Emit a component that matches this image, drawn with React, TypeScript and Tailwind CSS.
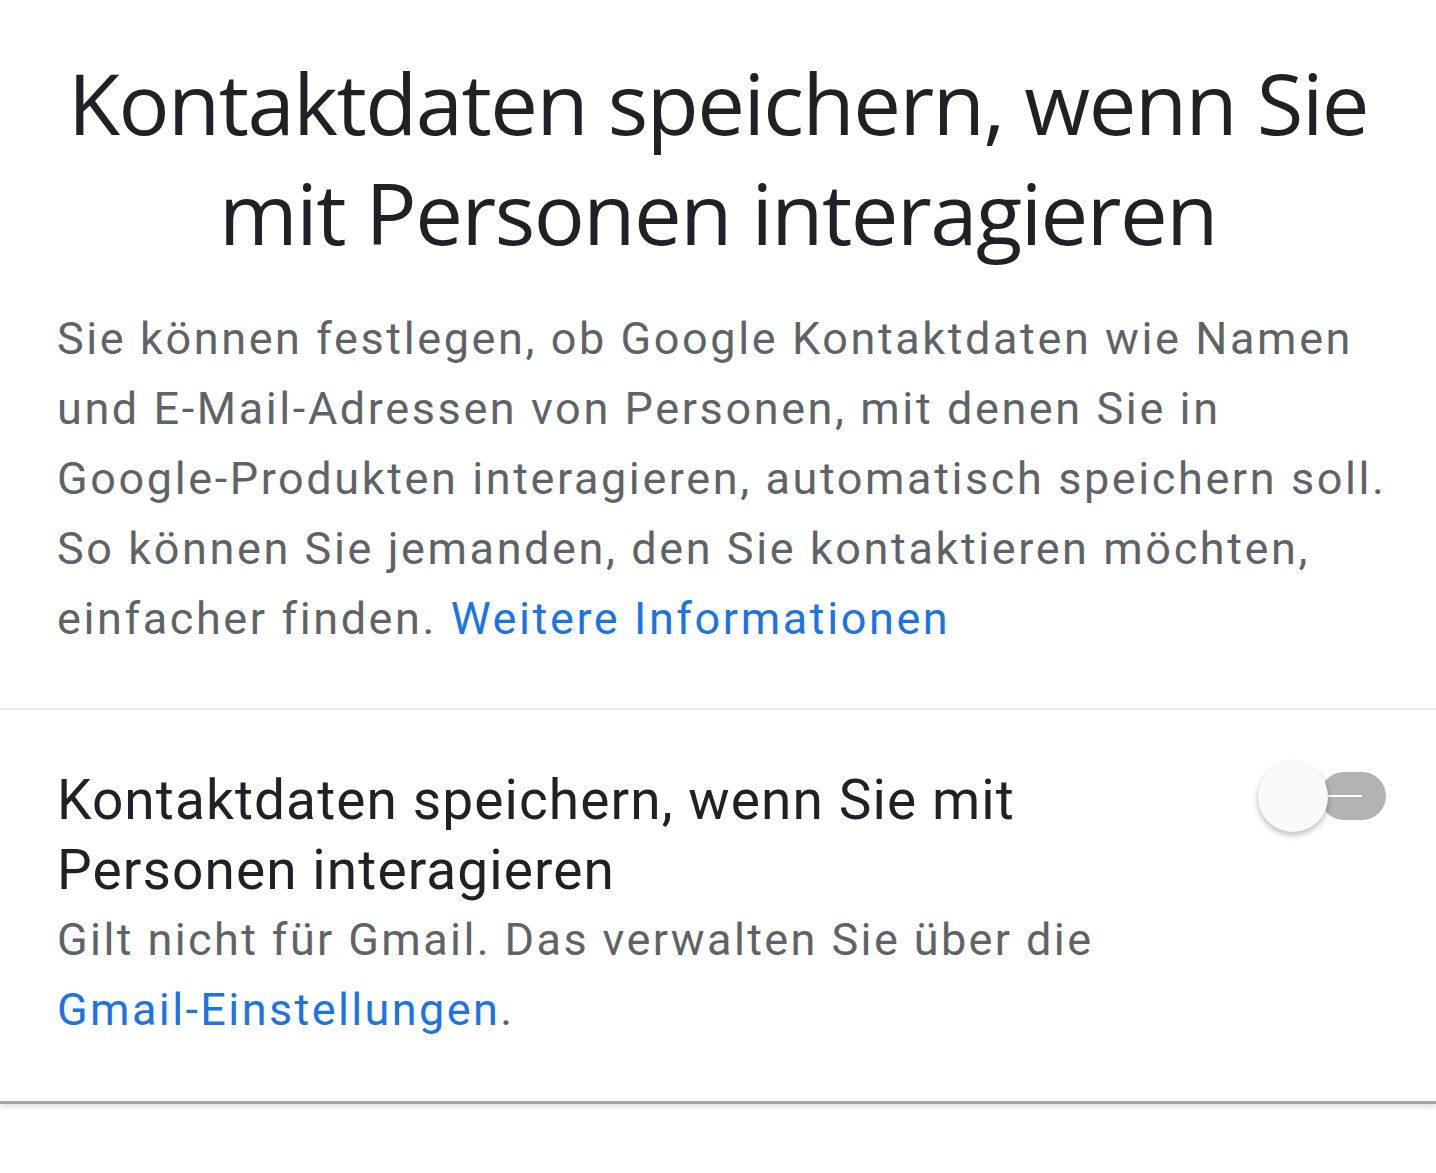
import React from "react";

function Toggle() {
  return (
    <div className="relative w-[128px] h-[70px] shrink-0 mt-[-3px]">
      <div className="absolute right-0 top-[10px] w-[66px] h-[48px] rounded-full bg-[#b3b3b3]">
        <div className="absolute left-[8px] top-[23px] w-[34px] h-[2px] bg-white" />
      </div>
      <div className="absolute left-0 top-0 w-[70px] h-[70px] rounded-full bg-[#fafafa] shadow-[0_3px_6px_rgba(0,0,0,0.28)]" />
    </div>
  );
}

function App() {
  return (
    <div className="w-[1436px] h-[1173px] bg-white overflow-hidden font-['Roboto',sans-serif]">
      <h1 className="pt-[47px] text-center text-[85px] leading-[110px] text-[#202124] font-['Open_Sans',sans-serif] font-normal tracking-[-1.5px]">
        Kontaktdaten speichern, wenn Sie
        <br />
        mit Personen interagieren
      </h1>

      <p className="mt-[37px] pl-[57px] text-[45px] leading-[70px] tracking-[2.6px] text-[#5f6368] whitespace-nowrap">
        Sie können festlegen, ob Google Kontaktdaten wie Namen
        <br />
        und E-Mail-Adressen von Personen, mit denen Sie in
        <br />
        Google-Produkten interagieren, automatisch speichern soll.
        <br />
        So können Sie jemanden, den Sie kontaktieren möchten,
        <br />
        einfacher finden. <span className="text-[#1a73e8]">Weitere Informationen</span>
      </p>

      <div className="mt-[54px] h-[2px] bg-[#ececec]" />

      <div className="flex items-start pl-[57px] pr-[50px] pt-[55px] pb-[56px] border-b-[3px] border-[#a4a4a4] shadow-[0_3px_5px_rgba(0,0,0,0.12)]">
        <div className="flex-1 whitespace-nowrap">
          <div className="text-[55px] leading-[70px] tracking-[1.1px] text-[#202124]">
            Kontaktdaten speichern, wenn Sie mit
            <br />
            Personen interagieren
          </div>
          <div className="text-[45px] leading-[70px] tracking-[2.4px] text-[#5f6368]">
            Gilt nicht für Gmail. Das verwalten Sie über die
            <br />
            <span className="text-[#1a73e8]">Gmail-Einstellungen</span>.
          </div>
        </div>
        <Toggle />
      </div>
    </div>
  );
}

export default App;
